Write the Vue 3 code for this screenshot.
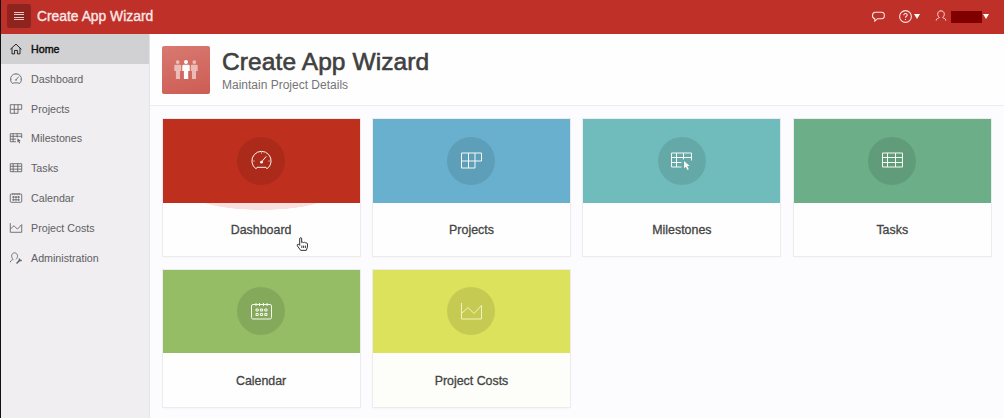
<script setup>
import { h } from 'vue'

const shapes = {
  home: [['path', { d: 'M.5 11 10.500 2l9.500 9M3.500 9v10H8v-6h5v6h4.500V9' }]],
  gauge: [
    ['path', { d: 'M5 18.800A9.600 9.600 0 1 1 16 18.800L15 17.300H6Z' }],
    ['path', { d: 'M10.500 12 15.300 6.300M10.500 2.500v1M2.500 11h1M17.500 11h1' }],
    ['circle', { cx: 10.5, cy: 12.2, r: 1.4, class: 'solid' }]
  ],
  projects: [['path', { d: 'M.5 3h20v8H.5ZM.5 11V18H14V3M7.500 3v15' }]],
  milestones: [
    ['path', { d: 'M10.500 17H.5V3h20v7.500M.5 7.500h20M.5 12.500h10M5.500 3v14M12.500 3v6.500' }],
    ['path', { d: 'M13 11v7.300l1.900-1.600 1.500 3.300 1.400-.7-1.500-3.200 2.500-.2Z', class: 'solid' }]
  ],
  tasks: [['path', { d: 'M.5 3h20v14H.5ZM.5 7.500h20M.5 12.500h20M5.500 3v14M13.500 3v14' }]],
  calendar: [
    ['rect', { x: 0.5, y: 3.5, width: 20, height: 14.5, rx: 1.5 }],
    ['path', { d: 'M5 2v3M8.500 2v3M12.500 2v3M16 2v3' }],
    ['path', { d: 'M5 8h2.200v2H5ZM9.400 8h2.200v2H9.400ZM13.800 8H16v2h-2.200ZM5 12.500h2.200v2H5ZM9.400 12.500h2.200v2H9.400ZM13.800 12.500H16v2h-2.200Z' }]
  ],
  chart: [['path', { d: 'M.5 2v16h20V4.500L13 12.500 7 6.500 .5 12.500' }]],
  admin: [
    ['path', { d: 'M.5 18c0-4 4.500-3.500 5-5.300C1 9 2.500 1.500 8 1.500s7 7.500 2.500 11.200' }],
    ['path', { d: 'm11.500 20 5.500-5.500', class: 'thick' }],
    ['path', { d: 'M16.500 11.500v3.500h4', class: 'thick' }]
  ],
  user: [['path', { d: 'M2 18.500c0-4.500 5-3.500 5.500-5.500C3 9.500 4 1.500 10.500 1.500S18 9.500 13.500 13c.5 2 5.500 1 5.500 5.500' }]],
  bubble: [['path', { d: 'M5 3.500h10.500c6 0 6 10.500 0 10.500H9L4.500 18v-4C-1 13 0 3.500 5 3.500Z' }]],
  help: [
    ['circle', { cx: 10.5, cy: 10.5, r: 9.5 }],
    ['path', { d: 'M7.800 8.500c0-4 5.700-3.500 5.400-.3C13 10.300 10.500 10 10.500 12.500M10.500 14.500V16' }]
  ]
}

const Icon = ({ name }) =>
  h('svg', { viewBox: '0 0 21 21', class: 'icon' }, shapes[name].map(([tag, attrs]) => h(tag, attrs)))
Icon.props = ['name']

const nav = [
  { label: 'Home', icon: 'home' },
  { label: 'Dashboard', icon: 'gauge' },
  { label: 'Projects', icon: 'projects' },
  { label: 'Milestones', icon: 'milestones' },
  { label: 'Tasks', icon: 'tasks' },
  { label: 'Calendar', icon: 'calendar' },
  { label: 'Project Costs', icon: 'chart' },
  { label: 'Administration', icon: 'admin' }
]

const cards = [
  { label: 'Dashboard', icon: 'gauge', tone: 'red' },
  { label: 'Projects', icon: 'projects', tone: 'blue' },
  { label: 'Milestones', icon: 'milestones', tone: 'teal' },
  { label: 'Tasks', icon: 'tasks', tone: 'green' },
  { label: 'Calendar', icon: 'calendar', tone: 'lime' },
  { label: 'Project Costs', icon: 'chart', tone: 'yellow' }
]
</script>

<template>
  <div class="app">
    <header class="topbar">
      <button class="menu" aria-label="Menu"><i></i><i></i><i></i><i></i></button>
      <span class="brand">Create App Wizard</span>
      <div class="tools">
        <Icon name="bubble" class="tool bubble" />
        <Icon name="help" class="tool help" />
        <span class="caret"></span>
        <Icon name="user" class="tool user" />
        <span class="redacted"></span>
        <span class="caret"></span>
      </div>
    </header>
    <div class="body">
      <nav class="side">
        <a v-for="(item, i) in nav" :key="item.label" class="item" :class="{ active: i === 0 }">
          <Icon :name="item.icon" class="nav-icon" />
          <span>{{ item.label }}</span>
        </a>
      </nav>
      <main class="main">
        <section class="hero">
          <div class="logo">
            <svg viewBox="0 0 24 20" width="24" height="20">
              <g fill="#fff" opacity=".55">
                <circle cx="3.700" cy="2.100" r="1.900" />
                <path d="M1.500 4.800H6Q7.200 4.800 7.200 6v5H6v8H1.900v-8H.3V6Q.3 4.800 1.500 4.800Z" />
                <circle cx="20.300" cy="2.100" r="1.900" />
                <path d="M18 4.800h4.500q1.200 0 1.200 1.200v5H22v8h-4v-8h-1.200V6Q16.800 4.800 18 4.800Z" />
              </g>
              <circle cx="12" cy="2.100" r="2" fill="#fff" />
              <path d="M9.500 4.800h5q1.200 0 1.200 1.200v5h-1.500v8H9.900v-8H8.300V6q0-1.200 1.200-1.200Z" fill="#fff" />
            </svg>
          </div>
          <div>
            <h1>Create App Wizard</h1>
            <p>Maintain Project Details</p>
          </div>
        </section>
        <section class="grid">
          <article v-for="card in cards" :key="card.label" class="card" :class="card.tone">
            <div class="swatch">
              <div class="disc"><Icon :name="card.icon" class="card-icon" /></div>
            </div>
            <div class="label"><span>{{ card.label }}</span></div>
            <svg v-if="card.tone === 'red'" class="hand" viewBox="0 0 13 15">
              <path d="M3.500 9V2q0-1.300 1-1.300T5.600 2v4q1-1 2 0 1-.8 2 .2 1.800-.4 2.200 1.200v3.400l-1.200 3.500H4.500L1 9.500q-.6-1.300.4-1.700T3.500 9Z" />
              <path d="M5.800 9.200v2.500M7.700 9.200v2.500M9.600 9.200v2.500" />
            </svg>
          </article>
        </section>
      </main>
    </div>
  </div>
</template>

<style>
html, body { margin: 0; overflow: hidden; }
</style>

<style scoped>
.app {
  box-sizing: border-box;
  height: 418px;
  border-left: 1px solid #111;
  font-family: "Liberation Sans", Arial, sans-serif;
  display: flex;
  flex-direction: column;
  background: #fcfcfe;
  overflow: hidden;
}
.topbar {
  flex: none;
  height: 34px;
  display: flex;
  align-items: center;
  background: #bf3029;
  color: #fbe9e7;
}
.menu {
  width: 24px;
  height: 24px;
  margin: -2px 6px 0;
  padding: 0;
  border: 0;
  border-radius: 2px;
  background: #8f241f;
  display: flex;
  flex-direction: column;
  align-items: center;
  justify-content: center;
  gap: 1.500px;
}
.menu i { width: 10px; height: 1px; background: #e8cbc8; }
.brand {
  font-size: 13.850px;
  line-height: 16px;
  margin-top: -2px;
  -webkit-text-stroke: .35px;
}
.tools {
  margin-left: auto;
  margin-right: 15px;
  margin-top: -2px;
  display: flex;
  align-items: center;
}
.icon {
  display: block;
  flex: none;
  overflow: visible;
  fill: none;
  stroke: currentColor;
}
.icon :deep(.solid) { fill: currentColor; stroke: none; }
.icon :deep(.thick) { stroke-width: 2.500; }
.tool { stroke-width: 1.700; height: 13px; width: 13px; }
.bubble { margin-right: 14px; }
.help { margin-right: 2px; }
.caret {
  border: 3px solid transparent;
  border-top: 5px solid #fff;
  border-bottom: 0;
}
.user { margin-left: 15px; width: 12px; height: 12px; }
.redacted { width: 31px; height: 12px; margin: 2px 1px 0 4px; background: #800000; }
.body { flex: 1; display: flex; min-height: 0; }
.side {
  flex: none;
  box-sizing: border-box;
  width: 149px;
  background: #f0eef1;
  border-right: 1px solid #e4e3e6;
}
.item {
  height: 29.850px;
  display: flex;
  align-items: center;
  gap: 9px;
  padding-left: 9px;
  font-size: 10.700px;
  color: #606062;
}
.item.active { background: #d1d0d2; color: #0c0c0c; }
.item.active span { -webkit-text-stroke: .4px; }
.nav-icon { width: 12px; height: 12px; stroke-width: 1.500; }
.main { flex: 1; min-width: 0; }
.hero {
  box-sizing: border-box;
  height: 72px;
  padding: 12px 0 0 12px;
  display: flex;
  gap: 12px;
  background: #fefefe;
  border-bottom: 1px solid #ededf1;
}
.logo {
  width: 48px;
  height: 48px;
  border-radius: 2px;
  background: linear-gradient(165deg, #d87970, #cd5c54);
  display: flex;
  align-items: center;
  justify-content: center;
}
h1 {
  margin: 2px 0 0;
  font-size: 24.500px;
  letter-spacing: .1px;
  line-height: 28px;
  font-weight: 400;
  color: #404040;
  -webkit-text-stroke: .6px;
}
p {
  margin: 1px 0 0;
  font-size: 12px;
  line-height: 16px;
  color: #757577;
}
.grid {
  display: grid;
  grid-template-columns: repeat(4, 197px);
  gap: 13.500px 13.400px;
  padding: 13px 0 0 12.600px;
}
.card {
  position: relative;
  height: 137px;
  background: #fefefe;
  box-shadow: 0 0 0 1px #ececef, 0 1px 2px #0001;
}
.swatch {
  height: 83.500px;
  display: flex;
  align-items: center;
  justify-content: center;
}
.disc {
  width: 48px;
  height: 48px;
  border-radius: 50%;
  background: rgba(0, 0, 0, .1);
  color: #f8f8f4;
  display: flex;
  align-items: center;
  justify-content: center;
}
.card-icon { width: 21px; height: 21px; stroke-width: 1; }
.label {
  box-sizing: border-box;
  height: 53.500px;
  padding-top: 1.500px;
  display: flex;
  align-items: center;
  justify-content: center;
  font-size: 12.400px;
  color: #444;
  -webkit-text-stroke: .3px;
}
.red .swatch { background: #bf2f1e; }
.red .label { background: radial-gradient(ellipse 66px 14px at 50% -7px, #f9dfde 97%, transparent 100%); }
.blue .swatch { background: #68b0ce; }
.teal .swatch { background: #70bbbb; }
.green .swatch { background: #6bae87; }
.lime .swatch { background: #94bd66; }
.yellow .swatch { background: #dce25c; }
.yellow .label { background: #fdfdfa; }
.yellow .disc { color: #f2f3b8; }
.hand {
  position: absolute;
  left: 133px;
  top: 118px;
  width: 13px;
  height: 14px;
  fill: #fff;
  stroke: #222;
  stroke-width: 1;
}
</style>
